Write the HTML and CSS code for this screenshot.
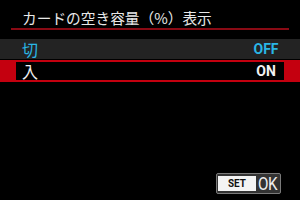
FILE: index.html
```html
<!DOCTYPE html>
<html lang="ja">
<head>
<meta charset="utf-8">
<link rel="stylesheet" href="styles.css">
</head>
<body>
<div class="screen">
  <div class="title">カードの空き容量（%）表示</div>
  <div class="list">
    <div class="row row-off">
      <span class="label">切</span>
      <span class="value">OFF</span>
    </div>
    <div class="row row-sel">
      <div class="inner">
        <span class="label">入</span>
        <span class="value">ON</span>
      </div>
    </div>
  </div>
  <div class="footer">
    <div class="setok">
      <span class="set"><span class="set-text">SET</span></span>
      <span class="ok">OK</span>
    </div>
  </div>
</div>
</body>
</html>
```
FILE: styles.css
```css
html, body {
  margin: 0;
  padding: 0;
  background: #000;
}
.screen {
  width: 300px;
  height: 200px;
  display: flex;
  flex-direction: column;
  background: #000;
  font-family: "Noto Sans CJK JP", "Noto Sans", sans-serif;
}
.title {
  margin: 0 11px;
  padding: 8px 0 0 11px;
  height: 20px;
  line-height: 20px;
  font-size: 14.7px;
  color: #e8e8e8;
  border-bottom: 2px solid #8a0a14;
  white-space: nowrap;
}
.list {
  margin-top: 9px;
  display: flex;
  flex-direction: column;
}
.row {
  display: flex;
  align-items: center;
}
.row-off {
  height: 20px;
  background: #232323;
  padding: 0 19px 0 22px;
  color: #2ab6e6;
}
.row-sel {
  margin-top: 1px;
  background: #c4000f;
  padding: 2px 16px;
}
.inner {
  flex: 1;
  height: 18px;
  background: #000;
  display: flex;
  align-items: center;
  padding: 0 3px 0 6px;
  color: #f2f2f2;
}
.label {
  flex: 1;
  font-size: 16px;
  line-height: 18px;
}
.value {
  width: 30px;
  text-align: center;
  font-family: Roboto, "Liberation Sans", sans-serif;
  font-weight: bold;
  font-size: 14px;
  line-height: 18px;
}
.footer {
  margin-top: auto;
  display: flex;
  justify-content: flex-end;
  padding: 0 19px 6px 0;
}
.setok {
  display: flex;
  align-items: center;
  gap: 2px;
  width: 61px;
  height: 19px;
  padding: 0 1px;
  border: 1px solid #7a7a7a;
  border-radius: 2px;
  background: #333;
}
.set {
  width: 38px;
  height: 15px;
  background: #f4f4f4;
  display: flex;
  align-items: center;
  justify-content: center;
}
.set-text {
  display: inline-block;
  font-family: Roboto, "Liberation Sans", sans-serif;
  font-weight: bold;
  font-size: 11px;
  line-height: 15px;
  color: #111;
  transform: scaleX(0.9);
}
.ok {
  display: inline-block;
  width: 20px;
  font-family: Roboto, "Liberation Sans", sans-serif;
  font-size: 19px;
  line-height: 19px;
  color: #eee;
  transform: scaleX(0.8);
  transform-origin: left center;
  letter-spacing: -0.5px;
}
```
